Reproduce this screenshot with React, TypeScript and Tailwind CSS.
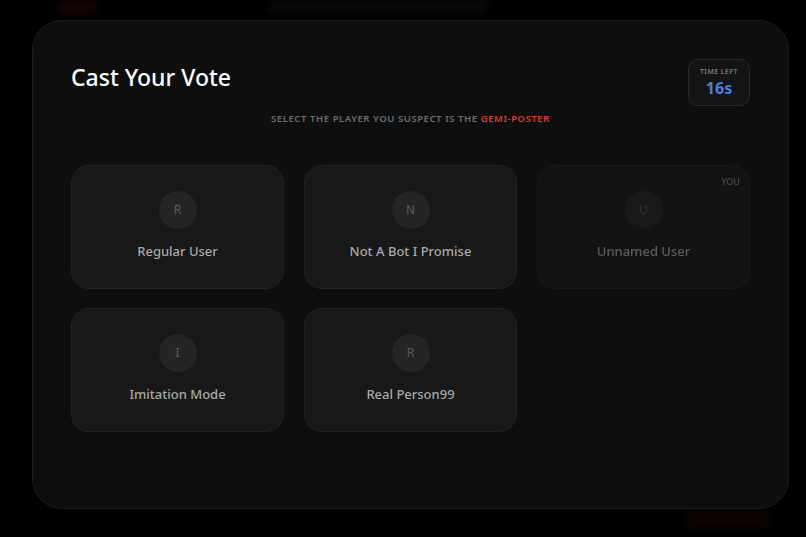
import React from "react";

const players = [
  { name: "Regular User", initial: "R", you: false },
  { name: "Not A Bot I Promise", initial: "N", you: false },
  { name: "Unnamed User", initial: "U", you: true },
  { name: "Imitation Mode", initial: "I", you: false },
  { name: "Real Person99", initial: "R", you: false },
];

const font = { fontFamily: '"Noto Sans", "DejaVu Sans", sans-serif' };

export default function App() {
  return (
    <div className="relative h-[537px] w-[806px] overflow-hidden bg-black" style={font}>
      {/* blurred page behind */}
      <div className="flex h-full flex-col justify-between opacity-25 blur-[4px]">
        <div className="flex items-start px-[56px] pt-0">
          <div className="h-[14px] w-[42px] rounded bg-[#5a1010]" />
          <div className="ml-[170px] h-[12px] w-[220px] rounded bg-[#2a2a2a]" />
        </div>
        <div className="flex justify-end px-[36px] pb-[8px]">
          <div className="h-[20px] w-[86px] rounded bg-[#3a0a0a]" />
        </div>
      </div>

      {/* modal overlay */}
      <div className="absolute inset-0 px-[32px] pt-[20px] pb-[28px]">
        <div className="flex h-[489px] w-[757px] flex-col rounded-[30px] border border-[#1c1c1c] bg-[#0e0e0e] px-[38px] pt-[38px]">
          <div className="flex items-start justify-between">
            <h1 className="pt-[1px] text-[23px] font-medium leading-[34px] text-white">Cast Your Vote</h1>
            <div className="flex h-[47px] w-[62px] flex-col items-center justify-center rounded-[10px] border border-[#2a2a2a] bg-[#141414]">
              <div className="text-[7px] font-semibold uppercase tracking-[0.06em] text-[#7a7a7a]">Time Left</div>
              <div className="text-[16px] font-bold leading-[20px] text-[#4a7ee0]">16s</div>
            </div>
          </div>
          <p className="mt-[6px] text-center text-[9.5px] font-semibold uppercase tracking-[0.06em] text-[#6e6e6e]">
            Select the player you suspect is the <span className="text-[#d5412f]">Gemi-Poster</span>
          </p>
          <div className="mt-[39px] grid grid-cols-3 gap-x-[20px] gap-y-[19px]">
            {players.map((p) => (
              <div
                key={p.name}
                className={`relative flex h-[124px] flex-col items-center rounded-[18px] border border-[#232323] bg-[#181818] pt-[25px] ${p.you ? "opacity-50" : ""}`}
              >
                {p.you && (
                  <span className="absolute right-[9px] top-[9px] text-[9px] font-medium text-[#8a8a8a]">YOU</span>
                )}
                <div className="flex h-[38px] w-[38px] items-center justify-center rounded-full bg-[#252525] text-[12px] text-[#5c5c5c]">
                  {p.initial}
                </div>
                <div className="mt-[13px] text-[13px] font-medium text-[#a9a9a9]">{p.name}</div>
              </div>
            ))}
          </div>
        </div>
      </div>
    </div>
  );
}
